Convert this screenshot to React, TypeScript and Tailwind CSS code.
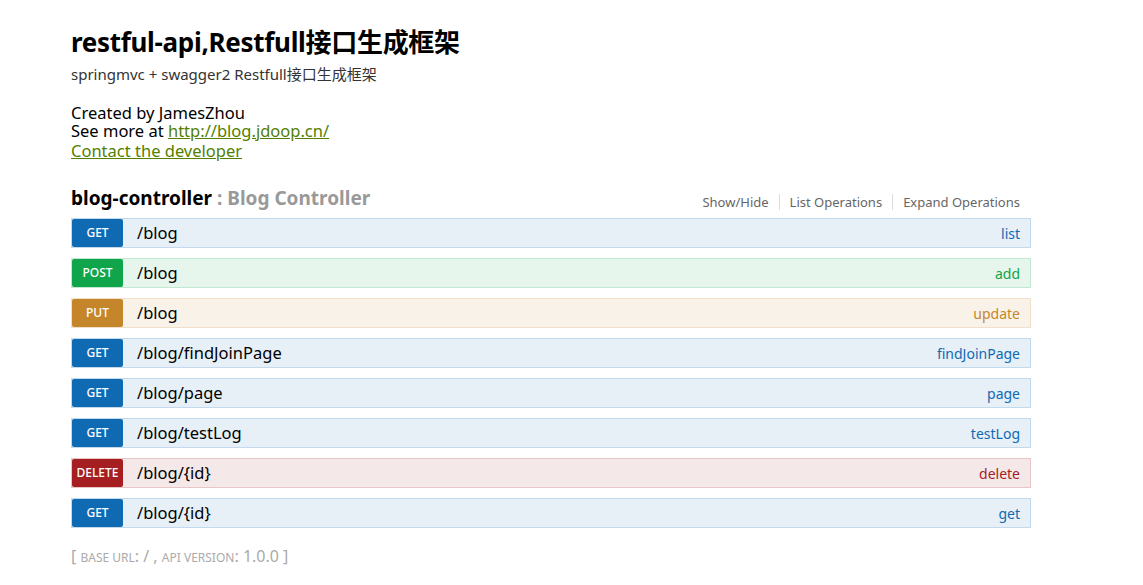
import React from "react";

type Op = { method: string; path: string; summary: string };

const ops: Op[] = [
  { method: "GET", path: "/blog", summary: "list" },
  { method: "POST", path: "/blog", summary: "add" },
  { method: "PUT", path: "/blog", summary: "update" },
  { method: "GET", path: "/blog/findJoinPage", summary: "findJoinPage" },
  { method: "GET", path: "/blog/page", summary: "page" },
  { method: "GET", path: "/blog/testLog", summary: "testLog" },
  { method: "DELETE", path: "/blog/{id}", summary: "delete" },
  { method: "GET", path: "/blog/{id}", summary: "get" },
];

const styles: Record<string, { row: string; badge: string; sum: string }> = {
  GET: { row: "bg-[#e7f0f7] border-[#c3d9ec]", badge: "bg-[#0f6ab4]", sum: "text-[#0f6ab4]" },
  POST: { row: "bg-[#e7f6ec] border-[#c3e8d1]", badge: "bg-[#10a54a]", sum: "text-[#10a54a]" },
  PUT: { row: "bg-[#f9f2e9] border-[#f0e0ca]", badge: "bg-[#c5862b]", sum: "text-[#c5862b]" },
  DELETE: { row: "bg-[#f5e8e8] border-[#e8c6c7]", badge: "bg-[#a41e22]", sum: "text-[#a41e22]" },
};

export default function App() {
  return (
    <div
      className="w-[1143px] h-[585px] bg-white text-black overflow-hidden"
      style={{ fontFamily: '"Noto Sans", "Noto Sans CJK SC", sans-serif' }}
    >
      <div className="ml-[71px] w-[960px] pt-[24px]">
        <h1 className="text-[26px] font-bold leading-[36px] tracking-[-0.3px]">restful-api,Restfull接口生成框架</h1>
        <div className="text-[15px] text-[#333] leading-[20px] mt-[4px]">springmvc + swagger2 Restfull接口生成框架</div>
        <div className="mt-[20px] text-[16.5px] leading-[18px]">Created by JamesZhou</div>
        <div className="text-[16.5px] leading-[18px]">
          See more at <a className="underline text-[#547f00]" href="#">http://blog.jdoop.cn/</a>
        </div>
        <div className="text-[16.5px] leading-[20px] mt-[1px]">
          <a className="underline text-[#547f00]" href="#">Contact the developer</a>
        </div>

        <div className="mt-[25px] flex items-end justify-between h-[32px] pb-[8px]">
          <div className="text-[19px] font-bold leading-[24px]">
            blog-controller <span className="text-[#999]">: Blog Controller</span>
          </div>
          <div className="flex text-[13px] text-[#666] leading-[16px] pr-[11px]">
            <span className="pr-[10px] border-r border-[#ddd]">Show/Hide</span>
            <span className="px-[10px] border-r border-[#ddd]">List Operations</span>
            <span className="pl-[10px]">Expand Operations</span>
          </div>
        </div>

        <div className="flex flex-col gap-[10px]">
          {ops.map((op, i) => {
            const s = styles[op.method];
            return (
              <div key={i} className={`flex items-center h-[30px] border ${s.row}`}>
                <div
                  className={`w-[51px] h-[28px] rounded-[2px] flex items-center justify-center text-white text-[12px] font-medium ${s.badge}`}
                >
                  {op.method}
                </div>
                <div className="ml-[14px] text-[16.5px] flex-1">{op.path}</div>
                <div className={`text-[14px] pr-[10px] ${s.sum}`}>{op.summary}</div>
              </div>
            );
          })}
        </div>

        <div className="mt-[16px] text-[#aaa] text-[16px]">
          [ <span className="text-[12px] uppercase">Base url</span>: / , <span className="text-[12px] uppercase">api version</span>: 1.0.0 ]
        </div>
      </div>
    </div>
  );
}
